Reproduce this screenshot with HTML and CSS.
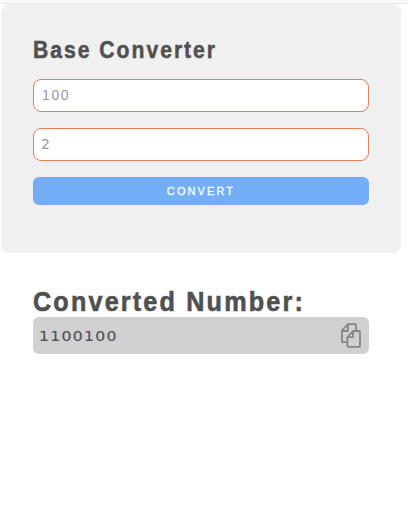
FILE: index.html
```html
<!DOCTYPE html>
<html lang="en">
<head>
<meta charset="utf-8">
<title>Base Converter</title>
<link rel="stylesheet" href="styles.css">
</head>
<body>
<div class="topline"></div>
<form class="card">
  <h2 class="title">Base Converter</h2>
  <input class="field" type="text" placeholder="100" aria-label="Number">
  <input class="field base" type="text" placeholder="2" aria-label="Base">
  <button class="convert" type="button">CONVERT</button>
</form>
<section class="result">
  <h1 class="heading">Converted Number:</h1>
  <div class="output">
    <span class="value">1100100</span>
    <svg class="copy" width="20" height="26" viewBox="0 0 20 26" fill="none" stroke="#858585" stroke-width="1.8" stroke-linejoin="round">
      <path d="M6.2 19.2H2Q1 19.2 1 18.2V7.5L7 1.2H14Q15 1.2 15 2.2V7.5M1.4 8H6Q7 8 7 7V1.2"/>
      <path d="M12 8H18Q19 8 19 9V22.8Q19 23.8 18 23.8H7.4Q6.4 23.8 6.4 22.8V14ZM6.6 14.2H11Q12 14.2 12 13.2V8"/>
    </svg>
  </div>
</section>
</body>
</html>
```
FILE: styles.css
```css
* { box-sizing: border-box; }
body {
  margin: 0;
  background: #fff;
  color: #505050;
  font-family: "Liberation Sans", Arial, sans-serif;
}
.topline {
  height: 4px;
  background: #f7f7f7;
  border-bottom: 1px solid #e9e9e9;
}
.card {
  display: flex;
  flex-direction: column;
  width: 400px;
  height: 249px;
  margin-left: 1px;
  padding: 32px;
  border-radius: 8px;
  background: #f0f0f0;
}
.title {
  margin: 0 0 15px;
  font-size: 23.5px;
  line-height: 28px;
  letter-spacing: 2.2px;
  white-space: nowrap;
  transform: scaleX(.9);
  transform-origin: left;
  -webkit-text-stroke: .5px #505050;
}
.field {
  width: 100%;
  height: 33px;
  margin: 0 0 16px;
  padding: 0 8px 2px;
  border: 1px solid #e38258;
  border-radius: 8px;
  outline: 0;
  background: #fff;
  font: 14px "Liberation Sans", Arial, sans-serif;
  letter-spacing: 1.6px;
}
.base { padding-left: 7px; font-family: "DejaVu Sans", sans-serif; }
.field::placeholder { color: #999; opacity: 1; }
.convert {
  height: 28px;
  padding: 0;
  border: 0;
  border-radius: 6px;
  background: #74aef6;
  color: #f4ffff;
  font: 11px "Liberation Sans", Arial, sans-serif;
  letter-spacing: 2.1px;
  -webkit-text-stroke: .3px #f4ffff;
}
.result { padding: 32px 39px 0 33px; }
.heading {
  margin: 0;
  padding-top: 1px;
  font-size: 28px;
  line-height: 31px;
  letter-spacing: 2.4px;
  white-space: nowrap;
  transform: scaleX(.9);
  transform-origin: left;
  -webkit-text-stroke: .6px #505050;
}
.output {
  display: flex;
  align-items: center;
  justify-content: space-between;
  height: 37px;
  padding: 0 8px 0 6px;
  border-radius: 6px;
  background: #d0d0d0;
}
.value {
  font: 14.5px "DejaVu Sans", sans-serif;
  letter-spacing: 1.2px;
  transform: scaleX(1.08);
  transform-origin: left;
  -webkit-text-stroke: .15px #505050;
}
.copy { display: block; }
```
